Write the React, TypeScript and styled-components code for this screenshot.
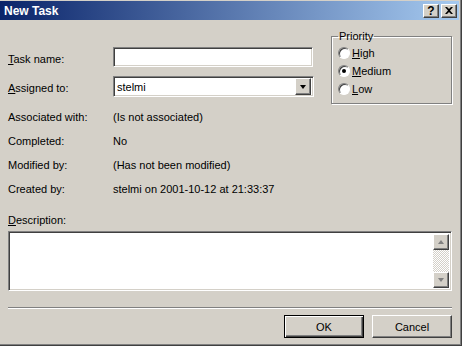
import React from 'react'
import styled, { createGlobalStyle, css } from 'styled-components'

const GlobalStyle = createGlobalStyle`
  html, body {
    margin: 0;
    padding: 0;
    background: #d4d0c8;
  }
  body {
    font-family: "Liberation Sans", Arial, sans-serif;
    font-size: 11px;
    color: #000;
  }
`

const raised = css`
  border: 1px solid;
  border-color: #fff #404040 #404040 #fff;
  box-shadow: inset -1px -1px #808080, inset 1px 1px #d4d0c8;
  background: #d4d0c8;
`

const sunken = css`
  border: 1px solid;
  border-color: #808080 #fff #fff #808080;
  box-shadow: inset 1px 1px #404040, inset -1px -1px #d4d0c8;
`

const Window = styled.div`
  box-sizing: border-box;
  width: 462px;
  height: 346px;
  display: flex;
  flex-direction: column;
  background: #d4d0c8;
  padding: 1px 2px 2px 0;
  border-right: 1px solid #404040;
  border-bottom: 1px solid #404040;
  box-shadow: inset -1px -1px #808080;
`

const TitleBar = styled.div`
  flex-shrink: 0;
  height: 19px;
  display: flex;
  align-items: center;
  padding: 0 2px 0 4px;
  background: linear-gradient(to right, #0a246a, #a6caf0);
`

const TitleText = styled.span`
  flex: 1;
  color: #fff;
  font-weight: bold;
  font-size: 12px;
`

const CaptionButtons = styled.div`
  display: flex;
  gap: 2px;
`

const CaptionButton = styled.div`
  ${raised};
  box-sizing: border-box;
  width: 16px;
  height: 14px;
  display: flex;
  align-items: center;
  justify-content: center;
  font-weight: bold;
  font-size: 12px;
  line-height: 1;
`

const Body = styled.div`
  flex: 1;
  display: flex;
  flex-direction: column;
  padding: 0 7px 0 8px;
`

const TopSection = styled.div`
  display: flex;
  align-items: flex-start;
`

const FieldGrid = styled.div`
  display: grid;
  grid-template-columns: 105px auto;
  grid-template-rows: 20px 21px;
  row-gap: 9px;
  align-items: center;
  padding-top: 27px;
`

const Label = styled.span`
  padding-top: 3px;
`

const Key = styled.span`
  text-decoration: underline;
`

const TextInput = styled.div`
  ${sunken};
  box-sizing: border-box;
  width: 200px;
  height: 20px;
  background: #fff;
`

const Combo = styled.div`
  ${sunken};
  box-sizing: border-box;
  width: 201px;
  height: 21px;
  background: #fff;
  display: flex;
  align-items: center;
  padding: 2px;
`

const ComboText = styled.span`
  flex: 1;
  padding-left: 1px;
`

const DropButton = styled.div`
  ${raised};
  box-sizing: border-box;
  width: 16px;
  height: 17px;
  display: flex;
  align-items: center;
  justify-content: center;
`

const Arrow = styled.div<{ $up?: boolean; $color?: string }>`
  width: 0;
  height: 0;
  border-left: 3.5px solid transparent;
  border-right: 3.5px solid transparent;
  ${p =>
    p.$up
      ? `border-bottom: 4px solid ${p.$color || '#000'};`
      : `border-top: 4px solid ${p.$color || '#000'};`}
`

const GroupBox = styled.fieldset`
  box-sizing: border-box;
  margin: 10px 0 0 auto;
  width: 121px;
  height: 74px;
  padding: 0 0 0 6px;
  border: 1px solid #808080;
  box-shadow: 1px 1px #fff, inset 1px 1px #fff;
`

const Legend = styled.legend`
  padding: 0 1px;
  margin-left: 0;
  line-height: 13px;
`

const RadioList = styled.div`
  display: flex;
  flex-direction: column;
  gap: 4px;
  padding-top: 3px;
`

const RadioRow = styled.label`
  display: flex;
  align-items: center;
  gap: 2px;
  height: 14px;
`

const RadioCircle = styled.span<{ $checked?: boolean }>`
  box-sizing: border-box;
  width: 12px;
  height: 12px;
  border-radius: 50%;
  background: #fff;
  border: 1px solid;
  border-color: #808080 #fff #fff #808080;
  box-shadow: inset 1px 1px #404040;
  display: flex;
  align-items: center;
  justify-content: center;
  &::after {
    content: '';
    display: ${p => (p.$checked ? 'block' : 'none')};
    width: 4px;
    height: 4px;
    border-radius: 50%;
    background: #000;
  }
`

const InfoGrid = styled.div`
  display: grid;
  grid-template-columns: 105px auto;
  grid-auto-rows: 24px;
  align-items: center;
  margin-top: 1px;
`

const DescLabel = styled.div`
  margin-top: 13px;
  height: 14px;
`

const DescBox = styled.div`
  ${sunken};
  box-sizing: border-box;
  margin-top: 3px;
  height: 60px;
  background: #fff;
  display: flex;
  justify-content: flex-end;
  padding: 2px;
`

const ScrollBar = styled.div`
  width: 16px;
  display: flex;
  flex-direction: column;
  background: repeating-conic-gradient(#fff 0 25%, #d4d0c8 0 50%) 0 0 / 2px 2px;
`

const ScrollButton = styled.div`
  ${raised};
  box-sizing: border-box;
  height: 16px;
  display: flex;
  align-items: center;
  justify-content: center;
`

const ScrollTrack = styled.div`
  flex: 1;
`

const Separator = styled.div`
  margin-top: 16px;
  border-top: 1px solid #808080;
  border-bottom: 1px solid #fff;
`

const ButtonRow = styled.div`
  display: flex;
  justify-content: flex-end;
  gap: 8px;
  margin-top: 6px;
`

const PushButton = styled.button<{ $default?: boolean }>`
  box-sizing: border-box;
  width: 80px;
  height: 23px;
  font-family: inherit;
  font-size: 11px;
  color: #000;
  padding: 0;
  ${raised};
  ${p =>
    p.$default &&
    css`
      border: 1px solid #000;
      box-shadow: inset 1px 1px #fff, inset -1px -1px #404040, inset -2px -2px #808080;
    `}
`

function CloseGlyph() {
  return (
    <svg width="8" height="7" viewBox="0 0 8 7">
      <path d="M0 0h2l2 2 2-2h2L5 3.5 8 7H6L4 5 2 7H0l3-3.5z" fill="#000" />
    </svg>
  )
}

export default function App() {
  return (
    <>
      <GlobalStyle />
      <Window>
        <TitleBar>
          <TitleText>New Task</TitleText>
          <CaptionButtons>
            <CaptionButton>?</CaptionButton>
            <CaptionButton>
              <CloseGlyph />
            </CaptionButton>
          </CaptionButtons>
        </TitleBar>
        <Body>
          <TopSection>
            <FieldGrid>
              <Label>
                <Key>T</Key>ask name:
              </Label>
              <TextInput />
              <Label>
                <Key>A</Key>ssigned to:
              </Label>
              <Combo>
                <ComboText>stelmi</ComboText>
                <DropButton>
                  <Arrow />
                </DropButton>
              </Combo>
            </FieldGrid>
            <GroupBox>
              <Legend>Priority</Legend>
              <RadioList>
                <RadioRow>
                  <RadioCircle />
                  <span>
                    <Key>H</Key>igh
                  </span>
                </RadioRow>
                <RadioRow>
                  <RadioCircle $checked />
                  <span>
                    <Key>M</Key>edium
                  </span>
                </RadioRow>
                <RadioRow>
                  <RadioCircle />
                  <span>
                    <Key>L</Key>ow
                  </span>
                </RadioRow>
              </RadioList>
            </GroupBox>
          </TopSection>
          <InfoGrid>
            <span>Associated with:</span>
            <span>(Is not associated)</span>
            <span>Completed:</span>
            <span>No</span>
            <span>Modified by:</span>
            <span>(Has not been modified)</span>
            <span>Created by:</span>
            <span>stelmi on 2001-10-12 at 21:33:37</span>
          </InfoGrid>
          <DescLabel>
            <Key>D</Key>escription:
          </DescLabel>
          <DescBox>
            <ScrollBar>
              <ScrollButton>
                <Arrow $up $color="#808080" />
              </ScrollButton>
              <ScrollTrack />
              <ScrollButton>
                <Arrow $color="#808080" />
              </ScrollButton>
            </ScrollBar>
          </DescBox>
          <Separator />
          <ButtonRow>
            <PushButton $default>OK</PushButton>
            <PushButton>Cancel</PushButton>
          </ButtonRow>
        </Body>
      </Window>
    </>
  )
}
